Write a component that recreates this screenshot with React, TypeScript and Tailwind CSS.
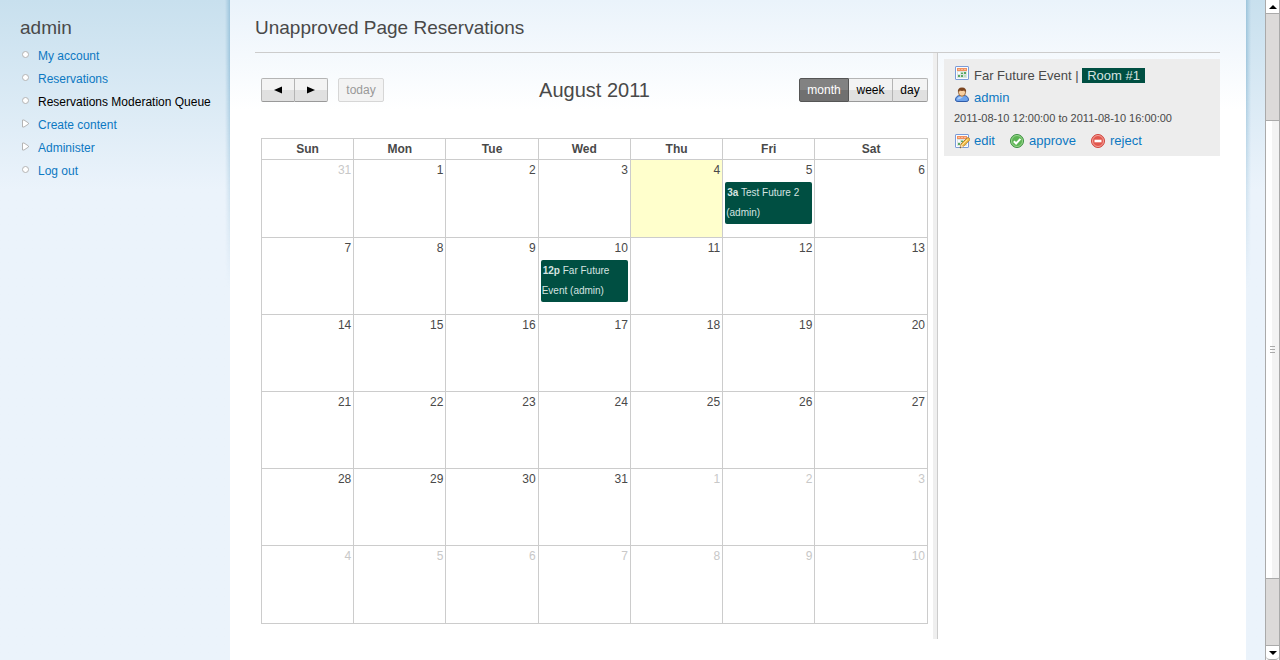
import React from "react";

const days = ["Sun", "Mon", "Tue", "Wed", "Thu", "Fri", "Sat"];

const menu = [
  { label: "My account", kind: "leaf" },
  { label: "Reservations", kind: "leaf" },
  { label: "Reservations Moderation Queue", kind: "leaf", active: true },
  { label: "Create content", kind: "collapsed" },
  { label: "Administer", kind: "collapsed" },
  { label: "Log out", kind: "leaf" },
];

type Cell = { day: number; other: boolean; today: boolean; event?: { time: string; title: string } };

const events: Record<number, { time: string; title: string }> = {
  5: { time: "3a", title: "Test Future 2 (admin)" },
  10: { time: "12p", title: "Far Future Event (admin)" },
};

const weeks: Cell[][] = Array.from({ length: 6 }, (_, w) =>
  Array.from({ length: 7 }, (_, d) => {
    const n = w * 7 + d;
    if (n === 0) return { day: 31, other: true, today: false };
    if (n > 31) return { day: n - 31, other: true, today: false };
    return { day: n, other: false, today: n === 4, event: events[n] };
  })
);

function Bullet({ kind }: { kind: string }) {
  return (
    <svg width="9" height="9" viewBox="0 0 9 9" className="shrink-0" aria-hidden="true">
      {kind === "leaf" ? (
        <circle cx="4.5" cy="4.5" r="3" fill="#fff" stroke="#b4b4b4" />
      ) : (
        <path d="M1.500 1v7h1.500l4.500-3v-1l-4.500-3z" fill="#fff" stroke="#b4b4b4" />
      )}
    </svg>
  );
}

function CalendarSheet({ pencil = false }: { pencil?: boolean }) {
  return (
    <svg width="16" height="16" viewBox="0 0 16 16" className="shrink-0" aria-hidden="true">
      <rect x="1.500" y="1.500" width="13" height="13" rx="0.500" fill="#fafcff" stroke="#7b9cd8" />
      <rect x="3" y="3" width="10" height="3" fill="#f0905f" />
      <path d="M4 4.500h8" stroke="#f8bd9c" strokeDasharray="2 1" />
      <path d="M3 6.500h10M3 9.500h10M3 12.500h10M3.500 6v7M6.500 6v7M9.500 6v7M12.500 6v7" stroke="#dbe4df" fill="none" />
      <path d="M10 7h2v2h-2zM7 7.500h2v1.500h-2zM4 10h2v2h-2zM7 10h2v2h-2z" fill="#58a862" />
      <path d="M10 10h2v2h-2z" fill="#bfdcc2" />
      {pencil && (
        <g>
          <path d="M6 15l1-4 6-6q1-1 2 0l.4.400q1 1 0 2l-6 6z" fill="#f4bd47" stroke="#a8742c" strokeWidth="0.800" />
          <path d="M8 12l5.500-5.500" stroke="#fde59b" />
          <path d="M6 15l1-3.500 2.500 2.500z" fill="#f5dfbd" />
          <path d="M6 15l.4-1.500 1 1z" fill="#333" />
        </g>
      )}
    </svg>
  );
}

function UserIcon() {
  return (
    <svg width="16" height="16" viewBox="0 0 16 16" className="shrink-0" aria-hidden="true">
      <path d="M1.500 13c0-3 2-4.500 4.500-4.500h4c2.500 0 4.500 1.500 4.500 4.500q0 1.500-2.500 1.500h-8q-2.500 0-2.500-1.500z" fill="#6ea3ec" stroke="#2f5ca8" />
      <path d="M3 12.500q.5-2.500 3-3h3q-2 3-6 3z" fill="#aacdfb" />
      <path d="M6 8l2 2.500 2-2.500z" fill="#f7cfa4" />
      <ellipse cx="8" cy="5.500" rx="3.500" ry="3.700" fill="#f8cfa0" stroke="#8a5526" strokeWidth="0.800" />
      <path d="M4 6q-1-5.500 4-5.500t4 5.500q-.3-2-1.500-2.500-2.500.8-5 0-1.200.5-1.500 2.500z" fill="#7b4520" />
    </svg>
  );
}

function ApproveIcon() {
  return (
    <svg width="16" height="16" viewBox="0 0 16 16" className="shrink-0" aria-hidden="true">
      <circle cx="8" cy="8" r="6.500" fill="#5cb454" stroke="#3d9142" />
      <circle cx="8" cy="8" r="5.500" fill="none" stroke="#9ad58e" />
      <path d="M4.800 8.200l2.300 2.300 4.300-4.600" fill="none" stroke="#fff" strokeWidth="2" />
    </svg>
  );
}

function RejectIcon() {
  return (
    <svg width="16" height="16" viewBox="0 0 16 16" className="shrink-0" aria-hidden="true">
      <circle cx="8" cy="8" r="6.500" fill="#e2574e" stroke="#d0463f" />
      <circle cx="8" cy="8" r="5.500" fill="none" stroke="#f3a39b" />
      <path d="M4.500 8h7" stroke="#fff" strokeWidth="2.600" />
    </svg>
  );
}

function Sidebar() {
  return (
    <aside className="w-[230px] shrink-0 pl-5 pt-4">
      <h2 className="text-[19px] leading-6 text-[#494949]">admin</h2>
      <ul className="mt-1">
        {menu.map((m) => (
          <li key={m.label} className="flex h-[23px] items-center gap-2 whitespace-nowrap pl-px text-xs">
            <span className="flex pb-0.5">
              <Bullet kind={m.kind} />
            </span>
            <a href="#" className={m.active ? "text-black" : "text-[#0c78c2]"}>
              {m.label}
            </a>
          </li>
        ))}
      </ul>
    </aside>
  );
}

function CalendarHeader() {
  const base = "h-6 border text-xs";
  const light =
    "border-[#b4b4b4] border-b-[#999] bg-linear-to-b from-[#f3f3f3] from-50% to-[#e0e0e0] to-50% text-black";
  return (
    <div className="grid grid-cols-[1fr_auto_1fr] items-center">
      <div className="flex">
        <button aria-label="Previous month" className={`${base} ${light} w-[34px] rounded-l-xs`}>
          <svg width="8" height="8" viewBox="0 0 8 8" className="mx-auto" aria-hidden="true">
            <path d="M8 0.500v7l-8-3.500z" />
          </svg>
        </button>
        <button aria-label="Next month" className={`${base} ${light} w-[33px] rounded-r-xs border-l-0`}>
          <svg width="8" height="8" viewBox="0 0 8 8" className="mx-auto" aria-hidden="true">
            <path d="M0 0.500v7l8-3.500z" />
          </svg>
        </button>
        <button disabled className={`${base} ml-2.5 w-[46px] rounded-xs border-[#d6d6d6] bg-[#f3f3f3] text-[#999]`}>
          today
        </button>
      </div>
      <h2 className="text-xl leading-6 text-[#494949]">August 2011</h2>
      <div className="flex justify-end">
        <button
          aria-pressed="true"
          className={`${base} w-[50px] rounded-l-xs border-[#555] bg-linear-to-b from-[#828282] from-50% to-[#707070] to-50% text-white`}
        >
          month
        </button>
        <button className={`${base} ${light} w-11 border-l-0`}>week</button>
        <button className={`${base} ${light} w-[35px] rounded-r-xs border-l-0`}>day</button>
      </div>
    </div>
  );
}

function Calendar() {
  return (
    <table className="mt-9 w-full table-fixed border-collapse text-xs text-[#494949]">
      <thead>
        <tr className="h-[21px]">
          {days.map((d) => (
            <th
              key={d}
              className={`border border-[#ccc] bg-white p-0 leading-5 font-bold ${d === "Sat" ? "" : "w-[13.850%]"}`}
            >
              {d}
            </th>
          ))}
        </tr>
      </thead>
      <tbody>
        {weeks.map((week, i) => (
          <tr key={i} className="h-[77px] first:h-[78px] last:h-[78px]">
            {week.map((c, j) => (
              <td key={j} className={`border border-[#ccc] px-0.5 py-0 align-top ${c.today ? "bg-[#ffffcc]" : "bg-white"}`}>
                <div className={`text-right leading-5 ${c.other ? "text-[#c8c8c8]" : ""}`}>{c.day}</div>
                {c.event && (
                  <a
                    href="#"
                    className="mt-0.5 block rounded-xs bg-[#004f42] p-px text-[10px] leading-5 text-[#d5e3e0]"
                  >
                    <b className="pl-px">{c.event.time}</b> {c.event.title}
                  </a>
                )}
              </td>
            ))}
          </tr>
        ))}
      </tbody>
    </table>
  );
}

function ReservationCard() {
  const link = "flex items-center gap-1 text-[13px] leading-5 text-[#0c78c2]";
  return (
    <section className="bg-[#ededed] px-2.5 pt-1.5 pb-[5px] text-[#494949]">
      <div className="flex h-[22px] gap-1 text-[13px] leading-[22px]">
        <CalendarSheet />
        <p>
          Far Future Event | <span className="bg-[#004f42] px-[5px] text-[#d5e3e0]">Room #1</span>
        </p>
      </div>
      <div className="flex h-[22px] gap-1 text-[13px] leading-[22px]">
        <UserIcon />
        <a href="#" className="text-[#0c78c2]">
          admin
        </a>
      </div>
      <p className="text-[11px] leading-[18px]">2011-08-10 12:00:00 to 2011-08-10 16:00:00</p>
      <div className="flex gap-3.5 pt-1">
        <a href="#" className={link}>
          <CalendarSheet pencil />
          edit
        </a>
        <a href="#" className={link}>
          <ApproveIcon />
          approve
        </a>
        <a href="#" className={link}>
          <RejectIcon />
          reject
        </a>
      </div>
    </section>
  );
}

function ScrollBar() {
  return (
    <div className="sticky top-0 flex h-screen w-[15px] shrink-0 flex-col border-x border-[#aaa] bg-white">
      <button aria-label="Scroll up" className="flex h-[13px] items-center justify-center rounded-t-sm bg-white">
        <svg width="8" height="4" viewBox="0 0 8 4" aria-hidden="true">
          <path d="M4 0l4 4h-8z" />
        </svg>
      </button>
      <div className="h-[108px] border-y border-[#aaa] bg-[#dcdad9]" />
      <div className="flex flex-1 items-center justify-center bg-linear-to-r from-white from-50% to-[#f3f3f3] to-50%">
        <div className="flex w-[5px] flex-col gap-0.5">
          <i className="h-px bg-[#aaa]" />
          <i className="h-px bg-[#aaa]" />
          <i className="h-px bg-[#aaa]" />
        </div>
      </div>
      <div className="h-[68px] border-y border-[#aaa] bg-[#dcdad9]" />
      <button
        aria-label="Scroll down"
        className="flex h-3.5 items-center justify-center rounded-b-sm border-b border-[#aaa] bg-white"
      >
        <svg width="8" height="4" viewBox="0 0 8 4" aria-hidden="true">
          <path d="M4 4l4-4h-8z" />
        </svg>
      </button>
    </div>
  );
}

function EdgeShade({ side }: { side: "left" | "right" }) {
  return (
    <div
      aria-hidden="true"
      className={`pointer-events-none absolute top-0 h-72 w-[5px] mask-b-from-20% ${
        side === "left"
          ? "right-full bg-linear-to-l from-[#7fb2d0]/60 to-transparent"
          : "left-full bg-linear-to-r from-[#7fb2d0]/60 to-transparent"
      }`}
    />
  );
}

export default function App() {
  return (
    <div className="flex min-h-screen bg-[#ebf3fb] font-['Liberation_Sans',Arial,sans-serif]">
      <div className="flex min-w-0 flex-1 bg-linear-to-b from-[#c8e0ee] to-[#ebf3fb] to-[190px]">
        <Sidebar />
        <main className="relative min-w-0 flex-1 bg-linear-to-b from-[#eaf3fb] to-white to-[110px] pt-4 pr-[26px] pb-5 pl-[25px]">
          <EdgeShade side="left" />
          <EdgeShade side="right" />
          <h1 className="h-9 text-[19px] leading-6 text-[#494949]">Unapproved Page Reservations</h1>
          <div className="flex border-t border-[#ccc]">
            <div className="min-w-0 flex-1 pt-[25px] pr-[5px] pb-[15px] pl-1.5">
              <CalendarHeader />
              <Calendar />
            </div>
            <div className="w-[5px] shrink-0 border-r border-[#ccc] bg-[#efefef]" />
            <div className="w-[282px] shrink-0 pt-1.5 pl-1.5">
              <ReservationCard />
            </div>
          </div>
        </main>
        <div className="w-[19px] shrink-0" />
      </div>
      <ScrollBar />
    </div>
  );
}
